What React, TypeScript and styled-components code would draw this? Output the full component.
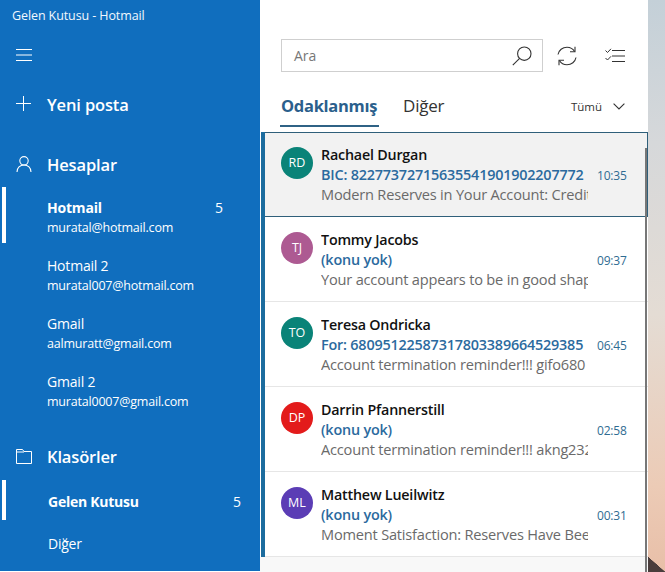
import styled, { createGlobalStyle } from "styled-components";

const accounts = [
  { name: "Hotmail", email: "muratal@hotmail.com", count: 5, active: true },
  { name: "Hotmail 2", email: "muratal007@hotmail.com" },
  { name: "Gmail", email: "aalmuratt@gmail.com" },
  { name: "Gmail 2", email: "muratal0007@gmail.com" },
];

const messages = [
  { initials: "RD", color: "#0a8378", from: "Rachael Durgan", subject: "BIC: 82277372715635541901902207772", preview: "Modern Reserves in Your Account: Credit Limit Increase", time: "10:35", selected: true },
  { initials: "TJ", color: "#ad5a92", from: "Tommy Jacobs", subject: "(konu yok)", preview: "Your account appears to be in good shape today and ready", time: "09:37" },
  { initials: "TO", color: "#0a8378", from: "Teresa Ondricka", subject: "For: 68095122587317803389664529385", preview: "Account termination reminder!!! gifo680 please respond", time: "06:45" },
  { initials: "DP", color: "#e31b1b", from: "Darrin Pfannerstill", subject: "(konu yok)", preview: "Account termination reminder!!! akng232 please respond", time: "02:58" },
  { initials: "ML", color: "#5b3db5", from: "Matthew Lueilwitz", subject: "(konu yok)", preview: "Moment Satisfaction: Reserves Have Been Added Today", time: "00:31" },
];

export default function App() {
  return (
    <>
      <GlobalStyle />
      <Window>
        <Sidebar>
          <TitleBar>Gelen Kutusu - Hotmail</TitleBar>
          <MenuRow>
            <svg width="16" height="12" viewBox="0 0 16 12" fill="none" stroke="#fff" strokeWidth="1">
              <path d="M0 .5h16M0 6h16M0 11.5h16" />
            </svg>
          </MenuRow>
          <NewMailRow>
            <IconSlot>
              <svg width="16" height="16" viewBox="0 0 16 16" fill="none" stroke="#fff" strokeWidth="1">
                <path d="M7.5 0v15M0 7.500h15" />
              </svg>
            </IconSlot>
            <HeadText>Yeni posta</HeadText>
          </NewMailRow>
          <SectionHead>
            <IconSlot>
              <svg width="16" height="16" viewBox="0 0 16 16" fill="none" stroke="#fff" strokeWidth="1.1">
                <circle cx="8" cy="4.8" r="4.2" />
                <path d="M1 16c0-4.200 3-7 7-7s7 2.800 7 7" />
              </svg>
            </IconSlot>
            <HeadText>Hesaplar</HeadText>
          </SectionHead>
          {accounts.map((a) => (
            <AccountItem key={a.name} $active={a.active}>
              <AccountName $active={a.active}>{a.name}</AccountName>
              {a.count && <AccountCount>{a.count}</AccountCount>}
              <AccountEmail>{a.email}</AccountEmail>
            </AccountItem>
          ))}
          <FolderHead>
            <IconSlot>
              <svg width="16" height="15" viewBox="0 0 16 15" fill="none" stroke="#fff" strokeWidth="1">
                <path d="M.5 14.500V.5h6l1.500 2h7.500v12zM.5 3h7.500" />
              </svg>
            </IconSlot>
            <HeadText>Klasörler</HeadText>
          </FolderHead>
          <FolderItem $active>
            <FolderName $active>Gelen Kutusu</FolderName>
            <FolderCount>5</FolderCount>
          </FolderItem>
          <FolderItem>
            <FolderName>Diğer</FolderName>
          </FolderItem>
        </Sidebar>

        <Main>
          <Toolbar>
            <SearchBox>
              <SearchHint>Ara</SearchHint>
              <svg width="20" height="20" viewBox="0 0 20 20" fill="none" stroke="#333" strokeWidth="1.1">
                <circle cx="12.3" cy="7.7" r="6.7" />
                <path d="M7.6 12.4L.8 19.2" />
              </svg>
            </SearchBox>
            <ToolButton>
              <svg width="20" height="20" viewBox="0 0 20 20" fill="none" stroke="#333" strokeWidth="1.1">
                <path d="M1 8.500C1.800 4.200 5.500 1.200 10 1.200c3.200 0 6 1.600 7.600 4.300M19 11.500c-.8 4.300-4.500 7.300-9 7.300-3.200 0-6-1.600-7.600-4.300" />
                <path d="M18 .8v5h-5M2 19.200v-5h5" />
              </svg>
            </ToolButton>
            <ToolButton>
              <svg width="20" height="16" viewBox="0 0 20 16" fill="none" stroke="#333" strokeWidth="1">
                <path d="M7 2.500h13M7 8h13M7 13.500h13" />
                <path d="M.5 2.500l2 2L6 .8M.5 10l2 2L6 8.300" />
              </svg>
            </ToolButton>
          </Toolbar>

          <TabRow>
            <Tab $active>Odaklanmış</Tab>
            <Tab>Diğer</Tab>
            <Filter>
              Tümü
              <svg width="12" height="7" viewBox="0 0 12 7" fill="none" stroke="#333" strokeWidth="1.1">
                <path d="M.6.6L6 6l5.400-5.400" />
              </svg>
            </Filter>
          </TabRow>

          <List>
            <Scrollbar />
            {messages.map((m) => (
              <Row key={m.initials} $selected={m.selected}>
                <Avatar $color={m.color}>{m.initials}</Avatar>
                <Body>
                  <From>{m.from}</From>
                  <Subject>{m.subject}</Subject>
                  <Preview>{m.preview}</Preview>
                </Body>
                <Time>{m.time}</Time>
              </Row>
            ))}
          </List>
          <ListFooter />
        </Main>

        <Wallpaper />
      </Window>
    </>
  );
}

const GlobalStyle = createGlobalStyle`
  html, body {
    margin: 0;
    padding: 0;
    height: 100%;
    overflow: hidden;
    background: #fff;
  }
  * { box-sizing: border-box; }
`;

const Window = styled.div`
  display: flex;
  width: 665px;
  height: 572px;
  font-family: "Open Sans", "Noto Sans", sans-serif;
  overflow: hidden;
`;

const Sidebar = styled.nav`
  width: 260px;
  height: 571px;
  flex: none;
  background: #106ebe;
  color: #fff;
  overflow: hidden;
`;

const TitleBar = styled.div`
  height: 32px;
  padding-left: 12px;
  font-size: 12.5px;
  line-height: 32px;
  letter-spacing: -0.1px;
  color: #f2f8fd;
`;

const MenuRow = styled.div`
  height: 46px;
  padding-left: 16px;
  display: flex;
  align-items: center;
`;

const NewMailRow = styled.div`
  height: 46px;
  margin-top: 3px;
  display: flex;
  align-items: center;
`;

const SectionHead = styled.div`
  height: 46px;
  margin-top: 14px;
  display: flex;
  align-items: center;
`;

const FolderHead = styled(SectionHead)`
  margin-top: 14px;
  height: 47px;
`;

const IconSlot = styled.span`
  width: 47px;
  padding-left: 16px;
  display: flex;
  align-items: center;
  flex: none;
`;

const HeadText = styled.span`
  font-size: 16.5px;
  font-weight: 600;
  letter-spacing: -0.15px;
`;

const AccountItem = styled.div<{ $active?: boolean }>`
  height: 58px;
  margin-left: 2px;
  padding: 10px 0 0 45px;
  display: grid;
  grid-template-columns: 1fr 45px;
  grid-template-rows: 22px 18px;
  align-content: start;
  background: ${(p) => (p.$active ? "linear-gradient(#fff, #fff) 0 0 / 4px 56px no-repeat" : "none")};
`;

const AccountName = styled.span<{ $active?: boolean }>`
  font-size: 14px;
  line-height: 22px;
  font-weight: ${(p) => (p.$active ? 700 : 400)};
  letter-spacing: -0.2px;
`;

const AccountCount = styled.span`
  font-size: 14px;
  line-height: 22px;
`;

const AccountEmail = styled.span`
  grid-column: 1 / -1;
  font-size: 12.5px;
  line-height: 17px;
  letter-spacing: -0.2px;
`;

const FolderItem = styled.div<{ $active?: boolean }>`
  height: 42px;
  margin-left: 2px;
  padding: 0 19px 0 46px;
  display: flex;
  align-items: center;
  justify-content: space-between;
  background: ${(p) => (p.$active ? "linear-gradient(#fff, #fff) 0 0 / 4px 40px no-repeat" : "none")};
`;

const FolderName = styled.span<{ $active?: boolean }>`
  font-size: 14px;
  font-weight: ${(p) => (p.$active ? 700 : 400)};
  letter-spacing: -0.25px;
`;

const FolderCount = styled.span`
  font-size: 14px;
`;

const Main = styled.main`
  width: 388px;
  flex: none;
  background: #fff;
  display: flex;
  flex-direction: column;
`;

const Toolbar = styled.div`
  height: 39px;
  margin-top: 39px;
  padding-left: 21px;
  display: flex;
  align-items: flex-start;
`;

const SearchBox = styled.div`
  width: 262px;
  height: 33px;
  border: 1px solid #cfcfcf;
  padding: 0 10px 0 12px;
  display: flex;
  align-items: center;
  justify-content: space-between;
`;

const SearchHint = styled.span`
  font-size: 14px;
  color: #777;
`;

const ToolButton = styled.span`
  width: 48px;
  height: 33px;
  display: flex;
  align-items: center;
  justify-content: center;
`;

const TabRow = styled.div`
  height: 54px;
  padding: 13px 23px 0 20px;
  display: flex;
  align-items: flex-start;
`;

const Tab = styled.span<{ $active?: boolean }>`
  height: 36px;
  width: ${(p) => (p.$active ? "99px" : "auto")};
  margin-right: 23px;
  padding-left: 1px;
  font-size: ${(p) => (p.$active ? "16.5px" : "17px")};
  line-height: 30px;
  letter-spacing: ${(p) => (p.$active ? "-0.3px" : "-0.2px")};
  font-weight: ${(p) => (p.$active ? 700 : 400)};
  color: ${(p) => (p.$active ? "#2b5f8c" : "#333")};
  border-bottom: ${(p) => (p.$active ? "2px solid #2f6285" : "none")};
  white-space: nowrap;
`;

const Filter = styled.span`
  margin-left: auto;
  height: 30px;
  display: flex;
  align-items: center;
  gap: 11px;
  font-size: 11.5px;
  color: #333;
`;

const List = styled.div`
  position: relative;
  margin-left: 1px;
  border-left: 4px solid #1c6c9e;
`;

const Scrollbar = styled.div`
  position: absolute;
  right: 1px;
  top: 16px;
  bottom: -20px;
  width: 2px;
  background: #777;
  z-index: 1;
`;

const Row = styled.div<{ $selected?: boolean }>`
  height: 85px;
  padding: ${(p) => (p.$selected ? "13px 19px 0 16px" : "14px 20px 0 16px")};
  display: flex;
  align-items: flex-start;
  background: ${(p) => (p.$selected ? "#f2f2f2" : "#fff")};
  border-top: ${(p) => (p.$selected ? "1px solid #2f5f7a" : "none")};
  border-right: ${(p) => (p.$selected ? "1px solid #2f5f7a" : "none")};
  border-bottom: 1px solid ${(p) => (p.$selected ? "#2f5f7a" : "#e6e6e6")};
`;

const Avatar = styled.span<{ $color: string }>`
  width: 32px;
  height: 32px;
  margin-top: 1px;
  flex: none;
  border-radius: 50%;
  background: ${(p) => p.$color};
  color: #fff;
  font-size: 12.5px;
  line-height: 32px;
  text-align: center;
`;

const Body = styled.div`
  width: 267px;
  margin-left: 8px;
  margin-top: -1px;
  flex: none;
  overflow: hidden;
  white-space: nowrap;
`;

const From = styled.div`
  font-size: 14.3px;
  line-height: 20px;
  font-weight: 600;
  letter-spacing: -0.2px;
  color: #111;
`;

const Subject = styled.div`
  font-size: 14.4px;
  line-height: 20px;
  font-weight: 600;
  letter-spacing: -0.2px;
  color: #2b6a9e;
`;

const Preview = styled.div`
  font-size: 14.6px;
  line-height: 19px;
  letter-spacing: -0.2px;
  color: #6a6a6a;
`;

const Time = styled.span`
  margin-left: 9px;
  margin-top: 21px;
  font-size: 12px;
  line-height: 17px;
  letter-spacing: -0.2px;
  color: #2f6c92;
`;

const ListFooter = styled.div`
  flex: 1;
  background: #f8f8f8;
`;

const Wallpaper = styled.div`
  flex: 1;
  background:
    linear-gradient(to top right, #4a3d3c 50%, transparent 52%) bottom / 100% 15px no-repeat,
    linear-gradient(#c4d0d8 0%, #d6d8da 25%, #e4dcd4 55%, #eccbb6 85%, #e8bfa8 100%);
`;
